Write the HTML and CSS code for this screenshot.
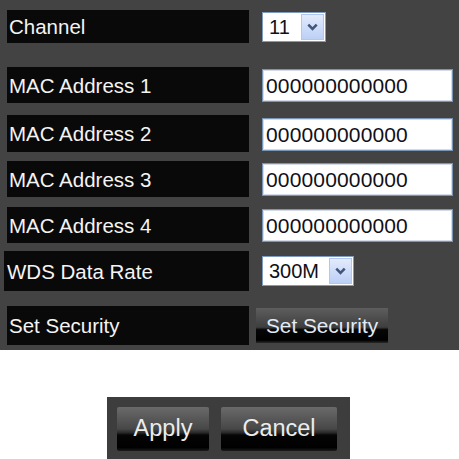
FILE: index.html
```html
<!DOCTYPE html>
<html>
<head>
<meta charset="utf-8">
<link rel="stylesheet" href="styles.css">
</head>
<body>
<div class="panel">
  <div class="row row-channel">
    <div class="label">Channel</div>
    <div class="value">
      <div class="select select-channel"><span class="sel-text">11</span><span class="sel-arrow"><svg width="11" height="8" viewBox="0 0 11 8"><polyline points="1.3,1.6 5.5,5.8 9.7,1.6" fill="none" stroke="#42557c" stroke-width="2.6"/></svg></span></div>
    </div>
  </div>
  <div class="row row-mac1">
    <div class="label">MAC Address 1</div>
    <div class="value"><div class="input">000000000000</div></div>
  </div>
  <div class="row row-mac2">
    <div class="label">MAC Address 2</div>
    <div class="value"><div class="input">000000000000</div></div>
  </div>
  <div class="row row-mac3">
    <div class="label">MAC Address 3</div>
    <div class="value"><div class="input">000000000000</div></div>
  </div>
  <div class="row row-mac4">
    <div class="label">MAC Address 4</div>
    <div class="value"><div class="input">000000000000</div></div>
  </div>
  <div class="row row-rate">
    <div class="label">WDS Data Rate</div>
    <div class="value">
      <div class="select select-rate"><span class="sel-text">300M</span><span class="sel-arrow"><svg width="11" height="8" viewBox="0 0 11 8"><polyline points="1.3,1.6 5.5,5.8 9.7,1.6" fill="none" stroke="#42557c" stroke-width="2.6"/></svg></span></div>
    </div>
  </div>
  <div class="row row-security">
    <div class="label">Set Security</div>
    <div class="value value-btn"><button class="sec-btn">Set Security</button></div>
  </div>
</div>
<div class="actions">
  <button class="btn btn-apply">Apply</button>
  <button class="btn btn-cancel">Cancel</button>
</div>
</body>
</html>
```
FILE: styles.css
```css
html, body {
  margin: 0;
  padding: 0;
  background: #ffffff;
  font-family: "Liberation Sans", Arial, sans-serif;
}

.panel {
  background: #434343;
  width: 459px;
  height: 350px;
  padding-top: 10px;
  box-sizing: border-box;
  display: flex;
  flex-direction: column;
}

.row {
  display: flex;
  align-items: center;
  padding-left: 7px;
}

.label {
  width: 242px;
  height: 100%;
  background: #090909;
  color: #f4f4f4;
  font-size: 20.5px;
  padding-left: 2px;
  padding-top: 1px;
  box-sizing: border-box;
  display: flex;
  align-items: center;
}

.row-channel { height: 33px; }
.row-mac1 { height: 36px; margin-top: 24px; }
.row-mac2 { height: 37px; margin-top: 12px; }
.row-mac3 { height: 36px; margin-top: 9px; }
.row-mac4 { height: 36px; margin-top: 10px; }
.row-rate { height: 40px; margin-top: 8px; padding-left: 4px; }
.row-rate .label { width: 245px; padding-left: 3px; }
.row-security { height: 39px; margin-top: 15px; }

.value {
  margin-left: 13px;
  display: flex;
  align-items: center;
  height: 100%;
}

.value-btn { margin-left: 7px; }

.input {
  width: 191px;
  height: 33px;
  margin-top: 1px;
  box-sizing: border-box;
  background: #ffffff;
  border: 1px solid #7a94b3;
  box-shadow: inset 0 0 0 1px #d3dce8;
  color: #101018;
  font-size: 21px;
  letter-spacing: 0.15px;
  padding-left: 3px;
  padding-top: 1px;
  display: flex;
  align-items: center;
}

.row-channel .value .select { margin-top: 1px; }

.select {
  height: 30px;
  box-sizing: border-box;
  background: #ffffff;
  border: 1px solid #7f9bbd;
  padding: 1px 1px 1px 6px;
  display: flex;
  align-items: center;
  color: #101018;
  font-size: 20px;
}

.select-channel { width: 64px; }
.select-rate { width: 92px; }

.sel-arrow {
  margin-left: auto;
  width: 23px;
  height: 26px;
  box-sizing: border-box;
  border: 1px solid #b3c6ee;
  background: linear-gradient(#e2ebfc, #bccff6);
  display: flex;
  align-items: center;
  justify-content: center;
}

.sel-arrow svg { display: block; }

.sec-btn {
  width: 132px;
  height: 35px;
  border: 0;
  padding: 0;
  margin: 0;
  background: linear-gradient(#5e5e5e 0%, #3e3e3e 55%, #060606 62%, #000000 92%, #2a2a2a 100%);
  color: #e2ebf6;
  font-family: "Liberation Sans", Arial, sans-serif;
  font-size: 20.8px;
}

.actions {
  margin-top: 47px;
  margin-left: 107px;
  width: 243px;
  height: 62px;
  box-sizing: border-box;
  background: #3d3d3d;
  padding: 10px 0 0 10px;
  display: flex;
  align-items: flex-start;
  gap: 12px;
}

.btn {
  height: 44px;
  border: 0;
  padding: 0;
  margin: 0;
  border-radius: 2px;
  background: linear-gradient(#6a6a6a 0%, #474747 50%, #2a2a2a 58%, #050505 64%, #000000 92%, #1c1c1c 100%);
  color: #ececec;
  font-family: "Liberation Sans", Arial, sans-serif;
  font-size: 23.5px;
  padding-bottom: 2px;
}

.btn-apply { width: 92px; }
.btn-cancel { width: 116px; }
```
